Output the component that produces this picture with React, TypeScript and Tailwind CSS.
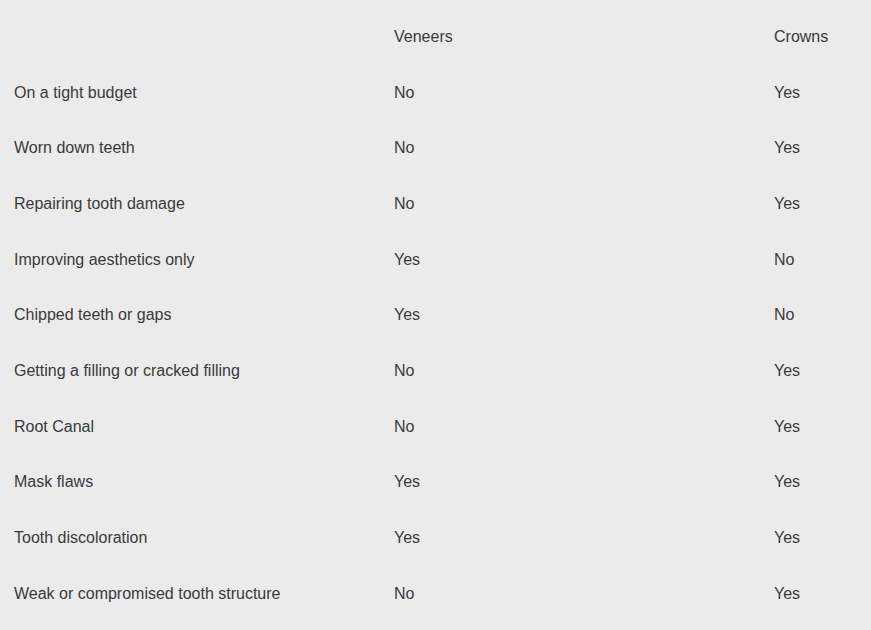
const rows: [string, string, string][] = [
  ["On a tight budget", "No", "Yes"],
  ["Worn down teeth", "No", "Yes"],
  ["Repairing tooth damage", "No", "Yes"],
  ["Improving aesthetics only", "Yes", "No"],
  ["Chipped teeth or gaps", "Yes", "No"],
  ["Getting a filling or cracked filling", "No", "Yes"],
  ["Root Canal", "No", "Yes"],
  ["Mask flaws", "Yes", "Yes"],
  ["Tooth discoloration", "Yes", "Yes"],
  ["Weak or compromised tooth structure", "No", "Yes"],
];

function Row({ cells }: { cells: [string, string, string] }) {
  return (
    <div className="grid grid-cols-[380px_380px_1fr] h-[55.7px] items-center">
      {cells.map((c, i) => (
        <div key={i} className="px-[14px]">
          {c}
        </div>
      ))}
    </div>
  );
}

export default function App() {
  return (
    <div
      className="w-[871px] h-[630px] overflow-hidden bg-[#ebebeb] text-[#3a3a3a] text-[16px] pt-[9px]"
      style={{ fontFamily: '"Liberation Sans", Arial, sans-serif' }}
    >
      <Row cells={["", "Veneers", "Crowns"]} />
      {rows.map((r) => (
        <Row key={r[0]} cells={r} />
      ))}
    </div>
  );
}
